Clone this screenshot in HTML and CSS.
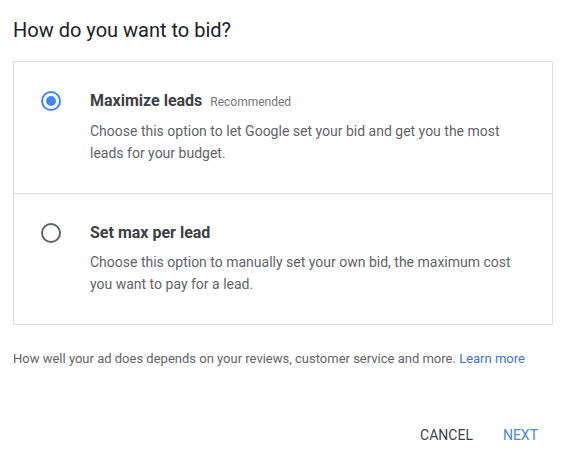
FILE: index.html
```html
<!DOCTYPE html>
<html lang="en">
<head>
    <meta charset="UTF-8">
    <meta name="viewport" content="width=device-width, initial-scale=1.0">
    <title>How do you want to bid?</title>
    <link rel="stylesheet" href="styles.css">
</head>
<body>

    <div class="dialog">
        <h2 class="dialog-title">How do you want to bid?</h2>

        <div class="options">
            <label class="option">
                <span class="radio checked"><span class="radio-dot"></span></span>
                <span class="option-body">
                    <span class="option-title">Maximize leads <span class="badge">Recommended</span></span>
                    <span class="option-desc">Choose this option to let Google set your bid and get you the most leads for your budget.</span>
                </span>
            </label>
            <label class="option">
                <span class="radio"></span>
                <span class="option-body">
                    <span class="option-title">Set max per lead</span>
                    <span class="option-desc">Choose this option to manually set your own bid, the maximum cost you want to pay for a lead.</span>
                </span>
            </label>
        </div>

        <p class="note">How well your ad does depends on your reviews, customer service and more. <a href="#">Learn more</a></p>

        <div class="actions">
            <button class="btn btn-cancel">Cancel</button>
            <button class="btn btn-next">Next</button>
        </div>
    </div>

</body>
</html>
```

FILE: styles.css
```css
body {
    margin: 0;
    font-family: Roboto, "Liberation Sans", Arial, sans-serif;
    background-color: #fff;
    color: #212121;
}

.dialog {
    padding: 18px 15px 0 13px;
}

.dialog-title {
    margin: 0 0 19px;
    font-size: 20px;
    font-weight: 400;
    line-height: 24px;
    color: #202124;
}

.options {
    border: 1px solid #dadada;
}

.option {
    display: flex;
    align-items: flex-start;
    padding: 29px 30px 30px 27px;
    height: 131px;
    box-sizing: border-box;
}

.option + .option {
    border-top: 1px solid #dadada;
}

.radio {
    flex: none;
    width: 20px;
    height: 20px;
    margin-top: 0;
    margin-right: 29px;
    border: 2px solid #5f6368;
    border-radius: 50%;
    box-sizing: border-box;
    display: flex;
    align-items: center;
    justify-content: center;
}

.radio.checked {
    border-color: #4285f4;
}

.radio-dot {
    width: 10px;
    height: 10px;
    border-radius: 50%;
    background-color: #4285f4;
}

.option-body {
    display: flex;
    flex-direction: column;
    gap: 8px;
}

.option-title {
    font-size: 16px;
    font-weight: 700;
    line-height: 20px;
    color: #3c4043;
}

.badge {
    margin-left: 4px;
    font-size: 12px;
    font-weight: 400;
    color: #757575;
}

.option-desc {
    font-size: 14px;
    line-height: 22px;
    color: #5f6368;
}

.note {
    margin: 25px 0 0;
    font-size: 13px;
    line-height: 18px;
    color: #5f6368;
}

.note a {
    color: #3f74c9;
    text-decoration: none;
}

.actions {
    display: flex;
    justify-content: flex-end;
    gap: 14px;
    margin-top: 51px;
}

.btn {
    padding: 8px 0;
    background: none;
    border: none;
    font-family: inherit;
    font-size: 14px;
    font-weight: 400;
    text-transform: uppercase;
    cursor: pointer;
}

.btn-cancel {
    color: #3c4043;
    padding-right: 16px;
}

.btn-next {
    color: #4a86d8;
    padding-right: 15px;
}
```
